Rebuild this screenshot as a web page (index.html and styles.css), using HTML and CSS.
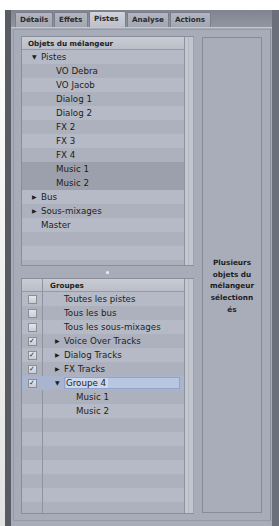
FILE: index.html
```html
<!DOCTYPE html>
<html lang="fr">
<head>
    <meta charset="UTF-8">
    <meta name="viewport" content="width=device-width, initial-scale=1.0">
    <title>Pistes</title>
    <link rel="stylesheet" href="styles.css">
</head>
<body>
    <div class="window">
        <div class="tabbar">
            <div class="tab">Détails</div>
            <div class="tab">Effets</div>
            <div class="tab active">Pistes</div>
            <div class="tab">Analyse</div>
            <div class="tab">Actions</div>
        </div>

        <div class="content">
            <div class="inner">
                <div class="lists">
                    <!-- mixer objects -->
                    <div class="list list-top">
                        <div class="list-main">
                            <div class="list-header">Objets du mélangeur</div>
                            <div class="list-body">
                                <div class="row lvl1"><span class="tri">▼</span>Pistes</div>
                                <div class="row lvl2">VO Debra</div>
                                <div class="row lvl2">VO Jacob</div>
                                <div class="row lvl2">Dialog 1</div>
                                <div class="row lvl2">Dialog 2</div>
                                <div class="row lvl2">FX 2</div>
                                <div class="row lvl2">FX 3</div>
                                <div class="row lvl2">FX 4</div>
                                <div class="row lvl2 selected">Music 1</div>
                                <div class="row lvl2 selected">Music 2</div>
                                <div class="row lvl1"><span class="tri">▶</span>Bus</div>
                                <div class="row lvl1"><span class="tri">▶</span>Sous-mixages</div>
                                <div class="row lvl1 plain">Master</div>
                            </div>
                        </div>
                        <div class="scrollbar"></div>
                    </div>

                    <div class="splitter"><span class="grip"></span></div>

                    <!-- groups -->
                    <div class="list list-bottom">
                        <div class="list-main">
                            <div class="list-header grp-header">
                                <span class="chk-col"></span>
                                <span class="grp-title">Groupes</span>
                            </div>
                            <div class="list-body grp-body">
                                <div class="grp-row"><span class="chk-col"><span class="box"></span></span><span class="grp-name g-plain">Toutes les pistes</span></div>
                                <div class="grp-row"><span class="chk-col"><span class="box"></span></span><span class="grp-name g-plain">Tous les bus</span></div>
                                <div class="grp-row"><span class="chk-col"><span class="box"></span></span><span class="grp-name g-plain">Tous les sous-mixages</span></div>
                                <div class="grp-row"><span class="chk-col"><span class="box checked">✓</span></span><span class="grp-name"><span class="tri">▶</span>Voice Over Tracks</span></div>
                                <div class="grp-row"><span class="chk-col"><span class="box checked">✓</span></span><span class="grp-name"><span class="tri">▶</span>Dialog Tracks</span></div>
                                <div class="grp-row"><span class="chk-col"><span class="box checked">✓</span></span><span class="grp-name"><span class="tri">▶</span>FX Tracks</span></div>
                                <div class="grp-row editing"><span class="chk-col"><span class="box checked">✓</span></span><span class="grp-name"><span class="tri">▼</span><span class="edit-field"><span class="sel">Groupe 4</span></span></span></div>
                                <div class="grp-row"><span class="chk-col"></span><span class="grp-name g-child">Music 1</span></div>
                                <div class="grp-row"><span class="chk-col"></span><span class="grp-name g-child">Music 2</span></div>
                            </div>
                        </div>
                        <div class="scrollbar"></div>
                    </div>
                </div>

                <div class="info-panel">
                    <p class="info-text">Plusieurs<br>objets du<br>mélangeur<br>sélectionn<br>és</p>
                </div>
            </div>
        </div>
    </div>
</body>
</html>
```

FILE: styles.css
```css
body {
    margin: 0;
    padding-left: 5px;
    background: linear-gradient(#ffffff, #e2e2e2);
    font-family: "DejaVu Sans", "Liberation Sans", sans-serif;
    color: #1d1e22;
    overflow: hidden;
}

.window {
    margin-top: 10px;
    width: 261px;
    height: 516px;
    border-left: 6px solid #575b64;
    border-right: 7px solid #6b6f79;
    display: flex;
    flex-direction: column;
}

.tabbar {
    height: 17px;
    background: linear-gradient(#80848e, #9296a0);
    display: flex;
    align-items: flex-end;
    gap: 1px;
    padding-left: 4px;
}

.tab {
    height: 14px;
    line-height: 14px;
    padding: 0 4px;
    font-size: 7.2px;
    font-weight: bold;
    color: #2a2b30;
    background: linear-gradient(#b3b6c0, #a2a6b1);
    border: 1px solid #7b7f89;
    border-bottom: none;
    border-radius: 2px 2px 0 0;
}

.tab:nth-child(1) { width: 28px; }
.tab:nth-child(2) { width: 24px; }
.tab:nth-child(3) { width: 27px; }
.tab:nth-child(4) { width: 32px; }
.tab:nth-child(5) { width: 31px; }

.tab.active {
    background: linear-gradient(#d0d3da, #bdc0c9);
    height: 15px;
}

.content {
    flex: 1;
    background: #a8acb8;
    border-top: 1px solid #c4c7cf;
    padding: 1px 1px 0 2px;
}

.inner {
    height: 484px;
    border: 1px solid #959aa5;
    border-right-color: #8a8e98;
    padding: 6px 7px 0 7px;
    display: flex;
    gap: 8px;
}

.lists {
    width: 173px;
    display: flex;
    flex-direction: column;
}

.list {
    display: flex;
    border: 1px solid #8a8e98;
    border-right: none;
}

.list-top { height: 228px; }
.list-bottom { height: 234px; }

.list-main {
    flex: 1;
    display: flex;
    flex-direction: column;
    overflow: hidden;
}

.list-header {
    height: 13px;
    line-height: 13px;
    font-size: 7.2px;
    font-weight: bold;
    padding-left: 6px;
    background: linear-gradient(#c9ccd4, #bbbec8);
    border-bottom: 1px solid #969aa5;
    box-sizing: border-box;
}

.list-body {
    flex: 1;
    background: repeating-linear-gradient(#b6bac6 0 14px, #adb1bd 14px 28px);
    font-size: 8.7px;
}

.row {
    height: 14px;
    line-height: 14px;
    white-space: nowrap;
}

.row.selected { background: #9ca0ac; }

.tri {
    display: inline-block;
    width: 9px;
    font-size: 6px;
    vertical-align: 1px;
}

.lvl1 { padding-left: 10px; }
.lvl1.plain { padding-left: 19px; }
.lvl2 { padding-left: 34px; }

.scrollbar {
    width: 8px;
    border-left: 1px solid #8d919b;
    border-right: 1px solid #9ea2ad;
    background: linear-gradient(90deg, #c5c8d0 0 3px, #b4b8c2 3px 4px, #c2c5cd 4px);
}

.splitter {
    height: 12px;
    display: flex;
    justify-content: center;
    align-items: center;
}

.grip {
    width: 3px;
    height: 3px;
    border-radius: 50%;
    background: #eef0f4;
    margin-left: -1px;
}

.grp-header {
    display: flex;
    padding-left: 0;
}

.chk-col {
    width: 20px;
    flex: none;
    border-right: 1px solid #8f939d;
    display: flex;
    justify-content: center;
    align-items: center;
}

.grp-title { padding-left: 7px; }

.grp-body {
    background:
        linear-gradient(90deg, transparent 20px, #8f939d 20px 21px, transparent 21px),
        repeating-linear-gradient(#b6bac6 0 14px, #adb1bd 14px 28px);
}

.grp-body .chk-col { border-right: none; margin-right: 1px; }

.grp-row {
    height: 14px;
    line-height: 14px;
    display: flex;
    white-space: nowrap;
}

.grp-name { padding-left: 12px; flex: 1; display: flex; }
.grp-name.g-plain { padding-left: 21px; }
.grp-name.g-child { padding-left: 33px; }

.box {
    width: 7px;
    height: 7px;
    border: 1px solid #8a8e97;
    background: linear-gradient(#e4e6ea, #c9ccd3);
    font-size: 7px;
    line-height: 7px;
    text-align: center;
    font-weight: bold;
    color: #26272c;
}

.grp-row.editing { background: #a9b5cf; }

.edit-field {
    flex: 1;
    margin: 1px 4px 1px 0;
    padding-left: 1px;
    line-height: 11px;
    background: #b9c6e0;
    border: 1px solid #8ea3cf;
}

.sel {
    background: #cfd8ea;
    padding-right: 2px;
}

.info-panel {
    margin-top: 1px;
    width: 58px;
    height: 474px;
    border: 1px solid #878b95;
    background: #a9adb9;
}

.info-text {
    margin: 219px 0 0;
    font-size: 7.3px;
    font-weight: bold;
    line-height: 11.7px;
    text-align: center;
    color: #1d1e23;
}
```
